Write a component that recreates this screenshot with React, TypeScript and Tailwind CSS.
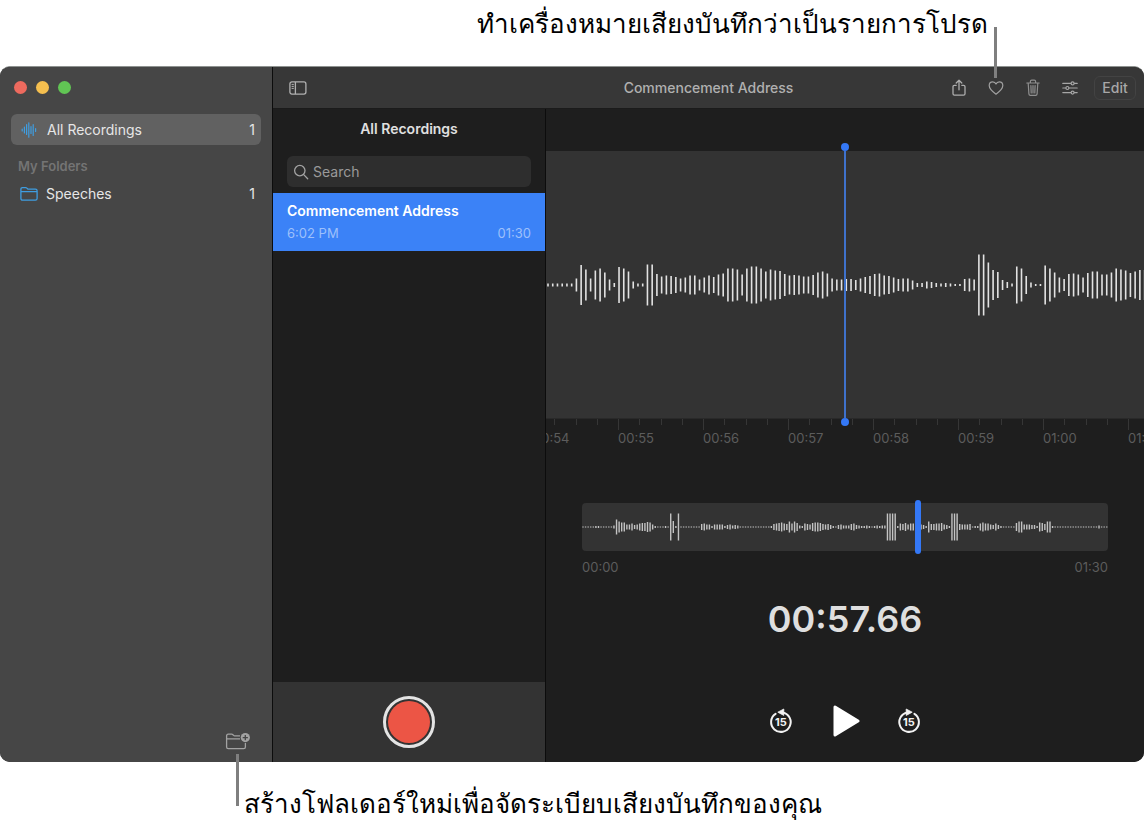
import type { ReactNode } from 'react';

// Bar heights of the zoomed-in waveform, one entry per bar
const DETAIL_LEVELS = [
  3, 3, 3, 3, 3, 3, 13, 40, 31, 13, 29, 33, 25, 11, 4, 36, 33, 27, 7, 3, 3, 41, 41, 22, 17, 19, 18, 16, 13, 15, 19, 19,
  11, 15, 19, 16, 21, 23, 33, 33, 31, 21, 33, 37, 37, 33, 27, 31, 29, 28, 22, 19, 20, 19, 17, 17, 20, 25, 27, 23, 13,
  11, 11, 12, 12, 10, 13, 16, 18, 22, 23, 19, 18, 15, 12, 13, 13, 9, 4, 4, 7, 6, 4, 3, 4, 3, 2, 2, 12, 13, 11, 61, 61,
  45, 30, 26, 10, 6, 3, 37, 33, 18, 5, 2, 2, 39, 33, 25, 15, 12, 22, 23, 21, 15, 24, 27, 27, 21, 21, 25, 33, 31, 29, 24,
  27, 30, 30,
];

// Bar heights of the whole recording
const OVERVIEW_LEVELS = [
  1, 1, 1, 1, 1, 2, 2, 1, 1, 1, 1, 1, 3, 15, 11, 9, 9, 5, 5, 7, 4, 5, 7, 8, 8, 10, 9, 5, 2, 1, 1, 1, 2, 1, 27, 12, 2,
  27, 1, 1, 1, 1, 1, 1, 1, 1, 6, 7, 5, 5, 2, 5, 5, 5, 5, 2, 4, 5, 3, 4, 3, 1, 1, 1, 1, 1, 1, 1, 1, 1, 1, 1, 1, 2, 6, 7,
  8, 9, 7, 6, 11, 7, 11, 8, 3, 2, 7, 6, 5, 8, 9, 9, 8, 6, 5, 6, 4, 2, 1, 4, 5, 3, 3, 3, 6, 7, 4, 3, 2, 2, 3, 2, 1, 2, 3,
  2, 3, 3, 27, 27, 27, 27, 2, 7, 6, 8, 5, 7, 7, 5, 5, 5, 4, 2, 11, 6, 6, 7, 7, 8, 5, 4, 2, 27, 27, 27, 6, 5, 5, 5, 6, 1,
  2, 2, 7, 9, 7, 7, 5, 4, 7, 4, 2, 1, 1, 1, 1, 1, 8, 11, 11, 5, 5, 5, 4, 4, 2, 9, 8, 6, 11, 11, 2, 1, 1, 1, 1, 1, 1, 1,
  1, 1, 1, 1, 1, 1, 1, 1, 1, 1, 3, 1, 1, 1, 1,
];

const SECONDS = ['00:54', '00:55', '00:56', '00:57', '00:58', '00:59', '01:00', '01:01'];

interface WaveformProps {
  levels: number[];
  width: number;
  height: number;
  start: number;
  step: number;
  barWidth: number;
  color: string;
  className: string;
}

function Waveform({ levels, width, height, start, step, barWidth, color, className }: WaveformProps) {
  return (
    <svg viewBox={`0 0 ${width} ${height}`} preserveAspectRatio="none" className={className} aria-hidden="true">
      {levels.map((level, idx) => (
        <rect
          key={idx}
          x={start + idx * step - barWidth / 2}
          y={(height - level) / 2}
          width={barWidth}
          height={level}
          fill={color}
        />
      ))}
    </svg>
  );
}

function VoiceIcon() {
  return (
    <svg width="16" height="16" viewBox="0 0 16 16" stroke="#3f9de0" strokeWidth="1.2" strokeLinecap="round" aria-hidden="true">
      <path d="M1.2 7v2M3.4 5v6M5.6 2.6v9.8M7.8 .8v14.4M10 4.5v7M12.2 2.6v10.8M14.6 6.5v3" />
    </svg>
  );
}

function FolderIcon() {
  return (
    <svg width="18" height="16" viewBox="0 0 18 16" fill="none" stroke="#3f9de0" strokeWidth="1.3" aria-hidden="true">
      <path d="M.9 12.6V3.2Q.9 1.6 2.5 1.6h3.2q.7 0 1.2.5l.6.6q.4.4 1 .4h6.9q1.700 0 1.700 1.700v7.8q0 1.6-1.700 1.600H2.600q-1.700 0-1.700-1.600ZM1 5.700h16" />
    </svg>
  );
}

function SidebarIcon() {
  return (
    <svg width="18" height="14" viewBox="0 0 18 14" fill="none" stroke="#b0b0b0" strokeWidth="1.3" aria-hidden="true">
      <rect x=".9" y=".9" width="16" height="12.2" rx="2" />
      <path d="M6.4 1v12" />
      <path d="M2.6 3.4h2.2M2.6 5.4h2.2M2.6 7.4h2.2" strokeWidth="1" />
    </svg>
  );
}

function ShareIcon() {
  return (
    <svg width="16" height="18" viewBox="0 0 16 18" fill="none" stroke="#adadad" strokeWidth="1.3" strokeLinecap="round" strokeLinejoin="round" aria-hidden="true">
      <path d="M5.2 6.3H3.4Q2 6.3 2 7.7v7.1q0 1.4 1.4 1.4h9.2q1.4 0 1.4-1.4V7.7q0-1.4-1.4-1.4h-1.8M8 10.8V1.4M5.2 4 8 1.2 10.8 4" />
    </svg>
  );
}

function HeartIcon() {
  return (
    <svg width="16" height="16" viewBox="0 0 16 16" fill="none" stroke="#a0a0a0" strokeWidth="1.2" strokeLinejoin="round" aria-hidden="true">
      <path d="M8 14.2C4 11.4 1.2 8.8 1.2 5.6 1.2 3.3 2.8 1.8 4.7 1.8 6.2 1.8 7.4 2.6 8 4c.6-1.4 1.8-2.2 3.3-2.2 1.9 0 3.5 1.5 3.5 3.8 0 3.2-2.8 5.8-6.8 8.6Z" />
    </svg>
  );
}

function TrashIcon() {
  return (
    <svg width="14" height="18" viewBox="0 0 14 18" fill="none" stroke="#8f8f8f" strokeWidth="1.2" strokeLinecap="round" strokeLinejoin="round" aria-hidden="true">
      <path d="M.8 4h12.4M4.4 3.8V2.5Q4.4 1.2 5.7 1.2h2.6q1.3 0 1.3 1.3v1.3M2.2 4.2l.7 10.7q.1 1.4 1.5 1.4h5.2q1.4 0 1.5-1.4l.7-10.7" />
      <path d="M4.9 6.5l.3 7.4M7 6.5v7.4M9.1 6.5l-.3 7.4" />
    </svg>
  );
}

function SlidersIcon() {
  return (
    <svg width="16" height="14" viewBox="0 0 16 14" fill="none" stroke="#a6a6a6" strokeWidth="1.2" strokeLinecap="round" aria-hidden="true">
      <path d="M.8 2.4h8M12.4 2.4h2.8M.8 7h2.8M7.2 7h8M.8 11.6h8M12.4 11.6h2.8" />
      <circle cx="10.6" cy="2.4" r="1.5" />
      <circle cx="5.4" cy="7" r="1.5" />
      <circle cx="10.6" cy="11.6" r="1.5" />
    </svg>
  );
}

function SearchIcon() {
  return (
    <svg width="16" height="16" viewBox="0 0 16 16" fill="none" stroke="#a3a3a3" strokeWidth="1.3" strokeLinecap="round" className="shrink-0" aria-hidden="true">
      <circle cx="6.8" cy="6.6" r="5.2" />
      <path d="m10.7 10.6 4 4.2" />
    </svg>
  );
}

function NewFolderIcon() {
  return (
    <svg width="26" height="18" viewBox="0 0 26 18" fill="none" stroke="#a2a2a2" strokeWidth="1.3" aria-hidden="true">
      <path d="M15 3.8H9.6q-.6 0-1-.4l-.7-.7q-.5-.5-1.2-.5H3.3q-1.7 0-1.7 1.7v11q0 1.7 1.7 1.7h15.4q1.7 0 1.7-1.7v-4M1.6 6.8H15" />
      <circle cx="20.3" cy="5.6" r="4.6" fill="#a2a2a2" stroke="none" />
      <path d="M20.3 3v5.2M17.7 5.6h5.2" stroke="#464646" />
    </svg>
  );
}

function SkipIcon({ forward = false }: { forward?: boolean }) {
  return (
    <svg width="24" height="26" viewBox="0 0 24 26" fill="none" stroke="#f2f2f2" aria-hidden="true">
      {forward ? (
        <>
          <path d="M10.4 4.4A9.8 9.8 0 1 0 17.4 5.8" strokeWidth="2" strokeLinecap="round" />
          <path d="M9.2 1v6.400L15.200 4.200Z" fill="#f2f2f2" strokeWidth=".8" strokeLinejoin="round" />
        </>
      ) : (
        <>
          <path d="M13.6 4.4A9.8 9.8 0 1 1 6.600 5.800" strokeWidth="2" strokeLinecap="round" />
          <path d="M14.800 1v6.400L8.800 4.200Z" fill="#f2f2f2" strokeWidth=".8" strokeLinejoin="round" />
        </>
      )}
      <text x="12" y="18" textAnchor="middle" fontSize="11" fontWeight="700" fill="#f2f2f2" stroke="none">
        15
      </text>
    </svg>
  );
}

function ToolbarButton({ label, children }: { label: string; children: ReactNode }) {
  return (
    <button type="button" aria-label={label} className="flex h-6 w-[37px] items-center justify-center">
      {children}
    </button>
  );
}

function Sidebar() {
  return (
    <aside className="flex w-[273px] shrink-0 flex-col border-r border-[#0c0c0c] bg-[#464646] text-[#e6e6e6]">
      <div className="flex gap-[9px] px-[14px] pt-[14px]">
        <button type="button" aria-label="Close" className="size-[13px] rounded-full bg-[#ed6a5e]" />
        <button type="button" aria-label="Minimize" className="size-[13px] rounded-full bg-[#f5bf4f]" />
        <button type="button" aria-label="Zoom" className="size-[13px] rounded-full bg-[#61c554]" />
      </div>
      <nav className="flex flex-1 flex-col px-[11px] pt-5">
        <button type="button" className="flex h-[31px] items-center rounded-md bg-[#616161] pl-[10px] pr-[6px] text-sm">
          <VoiceIcon />
          <span className="ml-[10px] flex-1 text-left">All Recordings</span>
          <span>1</span>
        </button>
        <h2 className="mt-[11px] px-[7px] text-[13px] leading-5 font-semibold text-[#747474]">My Folders</h2>
        <button type="button" className="mt-[2px] flex h-[31px] items-center pl-[9px] pr-[6px] text-sm">
          <FolderIcon />
          <span className="ml-2 flex-1 text-left">Speeches</span>
          <span>1</span>
        </button>
      </nav>
      <div className="flex justify-end px-[21px] pb-3">
        <button type="button" aria-label="New Folder">
          <NewFolderIcon />
        </button>
      </div>
    </aside>
  );
}

function Toolbar() {
  return (
    <header className="grid h-[42px] grid-cols-[1fr_auto_1fr] items-center border-b border-[#1b1b1b] bg-[#373737] px-2">
      <div className="pl-2">
        <button type="button" aria-label="Toggle Sidebar" className="flex h-6 items-center">
          <SidebarIcon />
        </button>
      </div>
      <h1 className="text-sm font-medium text-[#b0b0b0]">Commencement Address</h1>
      <div className="flex items-center justify-end">
        <ToolbarButton label="Share"><ShareIcon /></ToolbarButton>
        <ToolbarButton label="Favorite"><HeartIcon /></ToolbarButton>
        <ToolbarButton label="Delete"><TrashIcon /></ToolbarButton>
        <ToolbarButton label="Options"><SlidersIcon /></ToolbarButton>
        <button type="button" className="ml-[6px] h-6 w-[42px] rounded-md border border-[#434343] text-sm font-medium text-[#a8a8a8]">
          Edit
        </button>
      </div>
    </header>
  );
}

function RecordingList() {
  return (
    <section className="flex w-[273px] shrink-0 flex-col border-r border-[#0c0c0c] bg-[#1e1e1e]">
      <h2 className="pt-[10px] text-center text-sm font-semibold text-[#e0e0e0]">All Recordings</h2>
      <label className="mx-[14px] mt-[17px] flex h-[31px] items-center gap-1 rounded-md bg-[#2e2e2e] px-[6px]">
        <SearchIcon />
        <input
          type="text"
          aria-label="Search"
          placeholder="Search"
          className="w-full min-w-0 bg-transparent text-sm text-[#e0e0e0] outline-none placeholder:text-[#9a9a9a]"
        />
      </label>
      <button type="button" className="mt-[6px] bg-[#3b82f7] px-[14px] py-2 text-left">
        <div className="text-sm font-semibold text-white">Commencement Address</div>
        <div className="mt-[2px] flex justify-between text-[13px] leading-5 text-[#9dc0fb]">
          <span>6:02 PM</span>
          <span>01:30</span>
        </div>
      </button>
      <div className="mt-auto flex h-20 items-center justify-center bg-[#333333]">
        <button
          type="button"
          aria-label="Record"
          className="flex size-[52px] items-center justify-center rounded-full border-[3px] border-[#e4e4e4]"
        >
          <span className="size-[42px] rounded-full bg-[#ec5545]" />
        </button>
      </div>
    </section>
  );
}

function Ruler() {
  return (
    <div className="overflow-hidden border-t border-[#292929]">
      <div className="-ml-[13px] flex">
        {SECONDS.map((second) => (
          <div key={second} className="w-[85px] shrink-0">
            <div className="grid h-[11px] grid-cols-4 items-start">
              <span className="h-[11px] border-l border-[#363636]" />
              <span className="h-[6px] border-l border-[#363636]" />
              <span className="h-[6px] border-l border-[#363636]" />
              <span className="h-[6px] border-l border-[#363636]" />
            </div>
            <span className="block text-[13px] leading-4 text-[#5c5c5c]">{second}</span>
          </div>
        ))}
      </div>
    </div>
  );
}

function Player() {
  return (
    <section className="flex min-w-0 flex-1 flex-col bg-[#1e1e1e] pt-[42px]">
      <div className="relative">
        <div className="flex h-[267px] items-center bg-[#333333]">
          <Waveform
            levels={DETAIL_LEVELS}
            width={598}
            height={80}
            start={2}
            step={4.735}
            barWidth={1.6}
            color="#e2e2e2"
            className="h-20 w-full"
          />
        </div>
        <div className="absolute -top-2 -bottom-2 left-1/2 flex w-2 -translate-x-1/2 flex-col items-center">
          <span className="size-2 rounded-full bg-[#3478f6]" />
          <span className="w-[2px] flex-1 bg-[#3f72cc]" />
          <span className="size-2 rounded-full bg-[#3478f6]" />
        </div>
      </div>
      <Ruler />
      <div className="mt-[57px] px-9">
        <div className="relative rounded bg-[#333333]">
          <Waveform
            levels={OVERVIEW_LEVELS}
            width={527}
            height={48}
            start={1}
            step={2.585}
            barWidth={1.4}
            color="#c4c4c4"
            className="h-12 w-full"
          />
          <input
            type="range"
            aria-label="Position"
            min={0}
            max={90}
            step={0.01}
            defaultValue={57.66}
            className="absolute -inset-y-1 left-0 w-full appearance-none bg-transparent [&::-webkit-slider-thumb]:h-[54px] [&::-webkit-slider-thumb]:w-[6px] [&::-webkit-slider-thumb]:appearance-none [&::-webkit-slider-thumb]:rounded-full [&::-webkit-slider-thumb]:bg-[#3478f6]"
          />
        </div>
        <div className="mt-[6px] flex justify-between text-[13px] leading-5 text-[#5c5c5c]">
          <span>00:00</span>
          <span>01:30</span>
        </div>
      </div>
      <div className="mt-[22px] text-center text-4xl font-semibold text-[#dfdfdf]">00:57.66</div>
      <div className="mt-auto flex items-center justify-center gap-[37px] pb-6">
        <button type="button" aria-label="Skip back 15 seconds">
          <SkipIcon />
        </button>
        <button type="button" aria-label="Play">
          <svg width="30" height="34" viewBox="0 0 30 34" fill="#fff" stroke="#fff" strokeWidth="3" strokeLinejoin="round" aria-hidden="true">
            <path d="M5 3v28l23-14Z" />
          </svg>
        </button>
        <button type="button" aria-label="Skip forward 15 seconds">
          <SkipIcon forward />
        </button>
      </div>
    </section>
  );
}

export default function App() {
  return (
    <div className="flex min-h-screen flex-col bg-white font-[Inter,'Noto_Sans',sans-serif]">
      {/* Callout for the favorite button */}
      <div className="relative flex h-[66px] justify-end pr-[156px]">
        <p lang="th" className="pt-[6px] text-[26px] leading-9 text-black">
          ทำเครื่องหมายเสียงบันทึกว่าเป็นรายการโปรด
        </p>
        <span className="absolute top-[27px] right-[147px] z-10 h-[51px] w-[3px] bg-[#7f7f7f]" />
      </div>

      <main className="flex flex-1 overflow-hidden rounded-[10px] border-t border-[#8e9290] bg-[#1e1e1e]">
        <Sidebar />
        <div className="flex min-w-0 flex-1 flex-col">
          <Toolbar />
          <div className="flex flex-1">
            <RecordingList />
            <Player />
          </div>
        </div>
      </main>

      {/* Callout for the new folder button */}
      <div className="relative flex h-[63px] pl-[244px]">
        <span className="absolute -top-2 left-[236px] z-10 h-[52px] w-[3px] bg-[#7f7f7f]" />
        <p lang="th" className="pt-6 text-[26px] leading-9 text-black">
          สร้างโฟลเดอร์ใหม่เพื่อจัดระเบียบเสียงบันทึกของคุณ
        </p>
      </div>
    </div>
  );
}
